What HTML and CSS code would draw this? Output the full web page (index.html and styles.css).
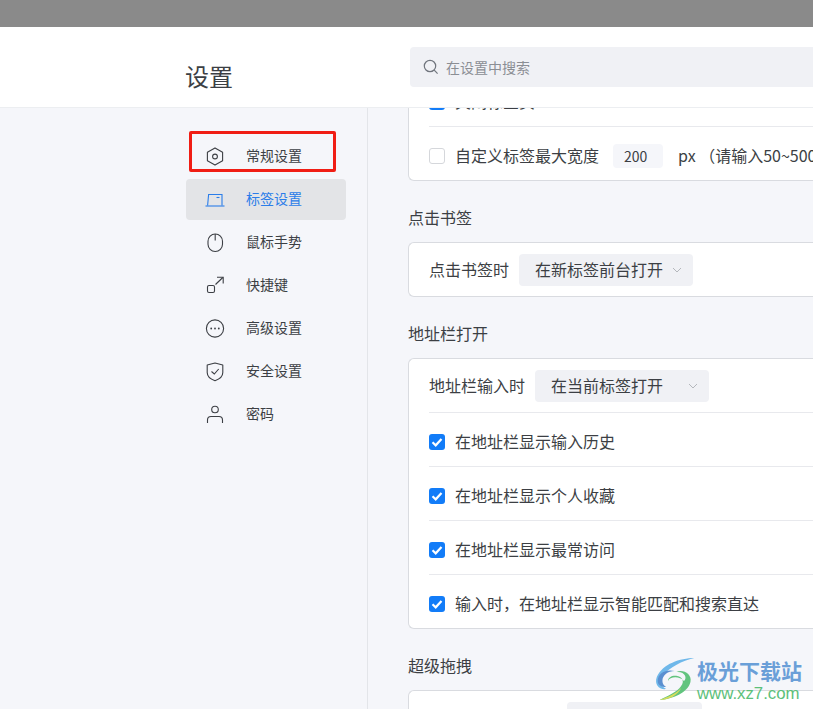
FILE: index.html
```html
<!DOCTYPE html>
<html lang="zh-CN">
<head>
    <meta charset="UTF-8">
    <meta name="viewport" content="width=device-width, initial-scale=1.0">
    <title>设置</title>
    <link rel="stylesheet" href="styles.css">
</head>
<body>
    <div class="titlebar"></div>

    <header class="header">
        <h1 class="page-title">设置</h1>
        <div class="search">
            <svg class="search-icon" width="16" height="16" viewBox="0 0 16 16" fill="none" stroke="#70757d" stroke-width="1.2">
                <circle cx="7" cy="7" r="5.7"/>
                <path d="M11.2 11.2L14.6 14.6"/>
            </svg>
            <span class="label">在设置中搜索</span>
        </div>
    </header>

    <div class="layout">
        <nav class="sidebar">
            <a class="nav-item">
                <svg class="nav-icon" viewBox="0 0 20 20" fill="none" stroke="currentColor" stroke-width="1.1">
                    <path d="M10 .9L17.6 5.2V13.8L10 18.1L2.4 13.8V5.2Z" stroke-linejoin="round"/>
                    <circle cx="10" cy="9.5" r="2.4"/>
                </svg>
                <span class="label">常规设置</span>
            </a>
            <a class="nav-item active">
                <svg class="nav-icon" viewBox="0 0 20 20" fill="none" stroke="currentColor" stroke-width="1.1">
                    <path d="M2.6 15.5L3.6 4.5H17V15.5"/>
                    <path d="M.5 16H19.5"/>
                    <path d="M11.5 7.5H14.5"/>
                </svg>
                <span class="label">标签设置</span>
            </a>
            <a class="nav-item">
                <svg class="nav-icon" viewBox="0 0 20 20" fill="none" stroke="currentColor" stroke-width="1.1">
                    <rect x="3" y="1" width="14.5" height="17.5" rx="7.2"/>
                    <path d="M10.2 1V7.5"/>
                </svg>
                <span class="label">鼠标手势</span>
            </a>
            <a class="nav-item">
                <svg class="nav-icon" viewBox="0 0 20 20" fill="none" stroke="currentColor" stroke-width="1.1">
                    <rect x="2.5" y="9.5" width="7" height="7" rx="1.5"/>
                    <path d="M10.5 8.5L17.8 1.5"/>
                    <path d="M12 1.2H18.2V7.5"/>
                </svg>
                <span class="label">快捷键</span>
            </a>
            <a class="nav-item">
                <svg class="nav-icon" viewBox="0 0 20 20" fill="none" stroke="currentColor" stroke-width="1.1">
                    <circle cx="10" cy="9.5" r="8.6"/>
                    <circle cx="6.2" cy="9.5" r=".9" fill="currentColor" stroke="none"/>
                    <circle cx="10" cy="9.5" r=".9" fill="currentColor" stroke="none"/>
                    <circle cx="13.8" cy="9.5" r=".9" fill="currentColor" stroke="none"/>
                </svg>
                <span class="label">高级设置</span>
            </a>
            <a class="nav-item">
                <svg class="nav-icon" viewBox="0 0 20 20" fill="none" stroke="currentColor" stroke-width="1.1">
                    <path d="M10 1L17.8 3V10.5C17.8 14.5 13.5 17.5 10 18.7C6.5 17.5 2.2 14.5 2.2 10.5V3Z" stroke-linejoin="round"/>
                    <path d="M6.5 9.5L9.3 12L13.7 7"/>
                </svg>
                <span class="label">安全设置</span>
            </a>
            <a class="nav-item">
                <svg class="nav-icon" viewBox="0 0 20 20" fill="none" stroke="currentColor" stroke-width="1.1">
                    <circle cx="10" cy="4.5" r="3.3"/>
                    <path d="M2.5 18V15C2.5 12.8 4 11.5 6 11.5H14C16 11.5 17.5 12.8 17.5 15V18"/>
                </svg>
                <span class="label">密码</span>
            </a>
        </nav>

        <main class="content">
            <section class="card card-scrolled">
                <div class="row row-check">
                    <span class="check checked"><svg viewBox="0 0 16 16" width="16" height="16"><path d="M3.5 8.2L6.7 11.3L12.5 4.9" fill="none" stroke="#fff" stroke-width="2.2"/></svg></span>
                    <span class="label">关闭标签页</span>
                </div>
                <div class="row row-check">
                    <span class="check"></span>
                    <span class="label">自定义标签最大宽度</span>
                    <span class="num-input">200</span>
                    <span class="label">px （请输入50~500px）</span>
                </div>
            </section>

            <h2 class="section-title">点击书签</h2>
            <section class="card">
                <div class="row">
                    <span class="label">点击书签时</span>
                    <span class="select"><span class="label">在新标签前台打开</span><svg class="chevron" width="10" height="6" viewBox="0 0 10 6" fill="none" stroke="#b4b7bc"><path d="M1 1L5 5L9 1"/></svg></span>
                </div>
            </section>

            <h2 class="section-title">地址栏打开</h2>
            <section class="card">
                <div class="row">
                    <span class="label">地址栏输入时</span>
                    <span class="select"><span class="label">在当前标签打开</span><svg class="chevron" width="10" height="6" viewBox="0 0 10 6" fill="none" stroke="#b4b7bc"><path d="M1 1L5 5L9 1"/></svg></span>
                </div>
                <div class="row row-check">
                    <span class="check checked"><svg viewBox="0 0 16 16" width="16" height="16"><path d="M3.5 8.2L6.7 11.3L12.5 4.9" fill="none" stroke="#fff" stroke-width="2.2"/></svg></span>
                    <span class="label">在地址栏显示输入历史</span>
                </div>
                <div class="row row-check">
                    <span class="check checked"><svg viewBox="0 0 16 16" width="16" height="16"><path d="M3.5 8.2L6.7 11.3L12.5 4.9" fill="none" stroke="#fff" stroke-width="2.2"/></svg></span>
                    <span class="label">在地址栏显示个人收藏</span>
                </div>
                <div class="row row-check">
                    <span class="check checked"><svg viewBox="0 0 16 16" width="16" height="16"><path d="M3.5 8.2L6.7 11.3L12.5 4.9" fill="none" stroke="#fff" stroke-width="2.2"/></svg></span>
                    <span class="label">在地址栏显示最常访问</span>
                </div>
                <div class="row row-check">
                    <span class="check checked"><svg viewBox="0 0 16 16" width="16" height="16"><path d="M3.5 8.2L6.7 11.3L12.5 4.9" fill="none" stroke="#fff" stroke-width="2.2"/></svg></span>
                    <span class="label">输入时，在地址栏显示智能匹配和搜索直达</span>
                </div>
            </section>

            <h2 class="section-title">超级拖拽</h2>
            <section class="card">
                <div class="row row-drag">
                    <span class="select select-drag"></span>
                </div>
            </section>
        </main>
    </div>

    <!-- red marker drawn over the first menu item -->
    <div class="marker"></div>

    <!-- watermark over the bottom right corner -->
    <div class="watermark">
        <svg class="watermark-logo" width="43" height="44" viewBox="0 0 46 44" preserveAspectRatio="none" fill="none">
            <path d="M43 1C28 1 9 7 3 20C0 28 6 33 13 32C7 29 5 24 10 18C17 10 30 4 43 1Z" fill="#6fb8ea"/>
            <path d="M4 24C4 16 13 12 22 14C15 14 9 18 9 24C9 27 11 29 13 30C8 30 4 28 4 24Z" fill="#5b8fd0"/>
            <path d="M15 24C15 20 20 18 25 19C30 20 33 24 29 29C25 35 14 39 6 43C20 42 36 36 39 25C41 17 31 12 24 15C33 14 36 21 32 24C28 19 17 19 15 24Z" fill="#62c47e"/>
            <path d="M6 43C14 40 22 38 29 31C26 38 16 43 6 43Z" fill="#d8dc5a"/>
        </svg>
        <div class="watermark-text">
            <div class="watermark-name">极光下载站</div>
            <div class="watermark-url">www.xz7.com</div>
        </div>
    </div>
</body>
</html>
```

FILE: styles.css
```css
* {
    box-sizing: border-box;
}
html, body {
    height: 100%;
}
body {
    margin: 0;
    overflow: hidden;
    position: relative;
    font-family: "Noto Sans CJK SC", "Liberation Sans", sans-serif;
    font-size: 16px;
    color: #3c3f44;
    background-color: #f5f6fa;
}
.titlebar {
    height: 27px;
    background-color: #8a8a8a;
}
.header {
    display: flex;
    align-items: center;
    height: 81px;
    padding-left: 185px;
    background-color: #fff;
    border-bottom: 1px solid #eceef1;
}
.page-title {
    width: 225px;
    margin: 0;
    font-size: 24px;
    font-weight: 400;
    line-height: 32px;
    padding-top: 17px;
}
.search {
    display: flex;
    align-items: center;
    flex: 1;
    height: 40px;
    padding-left: 13px;
    gap: 7px;
    font-size: 14px;
    color: #8b8e94;
    background-color: #f0f1f5;
    border-radius: 4px 0 0 4px;
}
.search-icon {
    flex: none;
}
/* the CJK font sits low in its line box, lift the text to the row's middle */
.label {
    padding-bottom: 2px;
}
.search .label {
    padding-bottom: 1px;
}
.layout {
    display: flex;
    height: 601px;
}
.sidebar {
    display: flex;
    flex-direction: column;
    flex: none;
    gap: 2px;
    width: 368px;
    padding: 28px 21px 0 186px;
    border-right: 1px solid #e3e5e9;
}
.nav-item {
    display: flex;
    align-items: center;
    gap: 21px;
    height: 41px;
    padding-left: 19px;
    font-size: 14px;
    border-radius: 4px;
}
.nav-item .label {
    padding-bottom: 4px;
}
.nav-item.active {
    color: #2b7de9;
    background-color: #e3e4e7;
}
.nav-icon {
    flex: none;
    width: 20px;
    height: 20px;
}
.content {
    flex: 1;
    min-width: 0;
    overflow: hidden;
    padding-left: 40px;
}
.card {
    width: 480px;
    background-color: #fff;
    border: 1px solid #d9dbe0;
    border-right: 0;
    border-radius: 6px 0 0 6px;
}
.card-scrolled {
    margin-top: -36px;
}
.section-title {
    margin: 24px 0 13px;
    font-size: 16px;
    font-weight: 400;
    line-height: 24px;
}
.row {
    display: flex;
    align-items: center;
    height: 54px;
    margin-left: 20px;
    white-space: nowrap;
    border-bottom: 1px solid #e8e9ed;
}
.row:last-child {
    height: 53px;
    border-bottom: 0;
}
.row-check {
    padding-top: 5px;
}
.row-check .label {
    padding-bottom: 3px;
}
.row-drag {
    align-items: flex-start;
    padding: 11px 0 0 138px;
}
.check {
    flex: none;
    width: 16px;
    height: 16px;
    margin-right: 10px;
    background-color: #fff;
    border: 1px solid #d5d7db;
    border-radius: 3px;
}
.check svg {
    display: block;
}
.check.checked {
    background-color: #127cf8;
    border: 0;
}
.num-input {
    width: 50px;
    height: 24px;
    margin: 0 15px 0 14px;
    padding-left: 11px;
    font-size: 14px;
    line-height: 24px;
    background-color: #f5f6fa;
    border-radius: 4px;
}
.select {
    display: flex;
    align-items: center;
    position: relative;
    width: 174px;
    height: 32px;
    margin-left: 10px;
    padding-left: 16px;
    background-color: #f0f1f5;
    border-radius: 4px;
}
.select-drag {
    width: 135px;
    margin-left: 0;
}
.chevron {
    position: absolute;
    right: 11px;
    top: 13px;
}
.marker {
    position: absolute;
    left: 189px;
    top: 131px;
    width: 147px;
    height: 41px;
    border: 3px solid #f01d14;
    border-radius: 2px;
}
.watermark {
    position: absolute;
    left: 654px;
    top: 657px;
    display: flex;
}
.watermark-logo {
    flex: none;
}
.watermark-name {
    font-size: 21px;
    font-weight: 700;
    line-height: 26px;
    color: #6a9fd8;
}
.watermark-url {
    font-family: "Liberation Sans", sans-serif;
    font-size: 16.8px;
    line-height: 20px;
    margin-top: 1px;
    color: #5cc07a;
}
```
